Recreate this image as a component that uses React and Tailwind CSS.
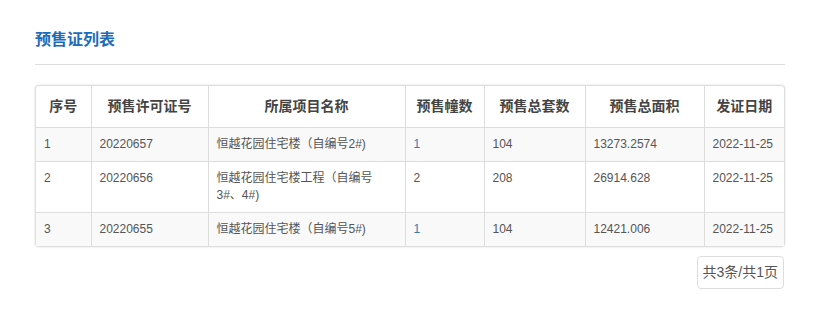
import React from 'react';

const columns = [
    { label: '序号', width: 'w-[55px]' },
    { label: '预售许可证号', width: 'w-[117px]' },
    { label: '所属项目名称', width: 'w-[197px]' },
    { label: '预售幢数', width: 'w-[79px]' },
    { label: '预售总套数', width: 'w-[101px]' },
    { label: '预售总面积', width: 'w-[119px]' },
    { label: '发证日期', width: 'w-[80px]' },
];

const rows = [
    { no: '1', permit: '20220657', project: '恒越花园住宅楼（自编号2#)', buildings: '1', link: true, units: '104', area: '13273.2574', date: '2022-11-25' },
    { no: '2', permit: '20220656', project: '恒越花园住宅楼工程（自编号3#、4#)', buildings: '2', link: false, units: '208', area: '26914.628', date: '2022-11-25' },
    { no: '3', permit: '20220655', project: '恒越花园住宅楼（自编号5#)', buildings: '1', link: true, units: '104', area: '12421.006', date: '2022-11-25' },
];

export default function App() {
    return (
        <div className="w-[830px] h-[317px] bg-white pl-[35px] pt-[29px] font-['Microsoft_YaHei','Liberation_Sans','Noto_Sans_CJK_SC',sans-serif] text-[#555]">
            <div className="w-[750px]">
                {/* Title */}
                <h2 className="text-[16px] leading-[22px] font-bold text-[#1a6dbb] pb-[13px] border-b border-[#ddd]">
                    预售证列表
                </h2>

                {/* Table */}
                <div className="mt-[21px] ml-px w-[748px] rounded-[3px] shadow-[0_0_2px_1px_rgba(0,0,0,0.18)]">
                    <table className="w-full border-collapse table-fixed text-[12px]">
                        <colgroup>
                            {columns.map((c) => (
                                <col key={c.label} className={c.width} />
                            ))}
                        </colgroup>
                        <thead>
                            <tr className="h-[41px]">
                                {columns.map((c, i) => (
                                    <th
                                        key={c.label}
                                        className={`text-[14px] font-bold text-[#444] text-center align-middle border-b border-[#ddd] ${i > 0 ? 'border-l' : ''}`}
                                    >
                                        {c.label}
                                    </th>
                                ))}
                            </tr>
                        </thead>
                        <tbody>
                            {rows.map((r, idx) => {
                                const cell = `px-[8px] py-[8px] align-top leading-[17px] border-[#ddd] ${idx < rows.length - 1 ? 'border-b' : ''}`;
                                return (
                                    <tr key={r.no} className={idx % 2 === 0 ? 'bg-[#f9f9f9]' : 'bg-white'}>
                                        <td className={cell}>{r.no}</td>
                                        <td className={`${cell} border-l`}>{r.permit}</td>
                                        <td className={`${cell} border-l`}>{r.project}</td>
                                        <td className={`${cell} border-l`}>
                                            {r.link ? (
                                                <a className="text-[#337ab7]">{r.buildings}</a>
                                            ) : (
                                                r.buildings
                                            )}
                                        </td>
                                        <td className={`${cell} border-l`}>{r.units}</td>
                                        <td className={`${cell} border-l`}>{r.area}</td>
                                        <td className={`${cell} border-l`}>{r.date}</td>
                                    </tr>
                                );
                            })}
                        </tbody>
                    </table>
                </div>

                {/* Pagination */}
                <div className="flex justify-end mt-[10px] pr-px">
                    <span className="px-[5px] h-[33px] leading-[31px] border border-[#ddd] rounded-[4px] text-[14px] text-[#555]">
                        共3条/共1页
                    </span>
                </div>
            </div>
        </div>
    );
}
